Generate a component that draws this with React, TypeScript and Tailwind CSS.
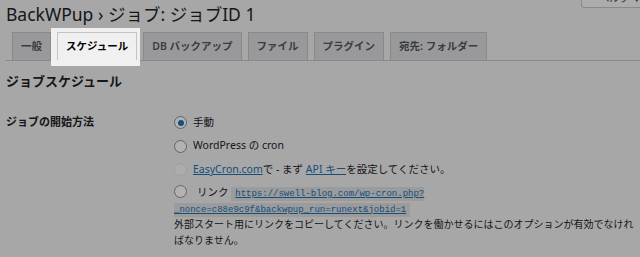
export default function App() {
  const tab =
    "ml-[6px] border border-b-0 border-[#c3c4c7] bg-[#dcdcde] px-[8px] py-[4px] text-[10.5px] leading-[19px] font-semibold text-[#50575e] whitespace-nowrap"

  return (
    <div className="relative h-[257px] w-[640px] overflow-hidden bg-[#f0f0f1] text-[#1d2327] [font-family:'Noto_Sans','Noto_Sans_CJK_JP',sans-serif]">
      {/* header */}
      <div className="flex items-start justify-between pl-[6px]">
        <h1 className="text-[17.5px] leading-[28px] font-normal text-[#1d2327]">BackWPup › ジョブ: ジョブID 1</h1>
        <button className="-mt-[16px] -mr-[20px] h-[24px] w-[79px] rounded-bl-[3px] border border-[#c3c4c7] bg-[#f6f7f7] pt-[4px] text-[10px] text-[#50575e]">
          ヘルプ ▼
        </button>
      </div>

      {/* tabs */}
      <nav className="ml-[6px] flex items-end border-b border-[#c3c4c7] pt-[4px]">
        <span className={tab}>一般</span>
        <span className="relative z-20 -mt-[4px] -mr-[3px] -mb-[6px] bg-[#f0f0f1] pt-[4px] pr-[3px] pb-[6px] pl-[6px]">
          <span className="block border border-b-0 border-[#c3c4c7] bg-[#f0f0f1] px-[8px] py-[4px] text-[10.5px] leading-[19px] font-semibold text-black whitespace-nowrap">
            スケジュール
          </span>
        </span>
        <span className={tab}>DB バックアップ</span>
        <span className={tab}>ファイル</span>
        <span className={tab}>プラグイン</span>
        <span className={tab}>宛先: フォルダー</span>
      </nav>

      <h2 className="mt-[11px] ml-[6px] text-[13px] leading-[18px] font-bold">ジョブスケジュール</h2>

      {/* form table */}
      <div className="mt-[21px] flex">
        <div className="w-[174px] shrink-0 pt-[1px] pl-[6px] text-[11px] leading-[20px] font-semibold">ジョブの開始方法</div>
        <div className="w-[462px] text-[10.5px]">
          <div className="flex h-[23.5px] items-center">
            <span className="mr-[6px] flex h-[13px] w-[13px] items-center justify-center rounded-full border border-[#8c8f94] bg-white">
              <span className="h-[6px] w-[6px] rounded-full bg-[#2271b1]" />
            </span>
            手動
          </div>
          <div className="flex h-[23.5px] items-center">
            <span className="mr-[6px] h-[13px] w-[13px] rounded-full border border-[#8c8f94] bg-white" />
            WordPress の cron
          </div>
          <div className="flex h-[23.5px] items-center">
            <span className="mr-[6px] h-[13px] w-[13px] rounded-full border border-[#e2e3e5] bg-[#f6f7f7]" />
            <a className="text-[#2271b1] underline">EasyCron.com</a>で - まず&nbsp;<a className="text-[#2271b1] underline">API キー</a>を設定してください。
          </div>
          <p className="mt-[2px] leading-[16px]">
            <span className="mr-[10px] inline-block h-[13px] w-[13px] rounded-full border border-[#8c8f94] bg-white align-[-2px]" />
            リンク{" "}
            <code className="bg-black/[.07] px-[4px] py-[2px] text-[9px] leading-none text-[#2271b1] underline [font-family:'Liberation_Mono',monospace]">
              https://swell-blog.com/wp-cron.php?<wbr />_nonce=c88e9c9f&amp;backwpup_run=runext&amp;jobid=1
            </code>
          </p>
          <p className="text-[10px] leading-[16px]">
            外部スタート用にリンクをコピーしてください。リンクを働かせるにはこのオプションが有効でなければなりません。
          </p>
        </div>
      </div>

      {/* dim overlay */}
      <div className="absolute inset-0 z-10 bg-black/30" />
    </div>
  )
}
